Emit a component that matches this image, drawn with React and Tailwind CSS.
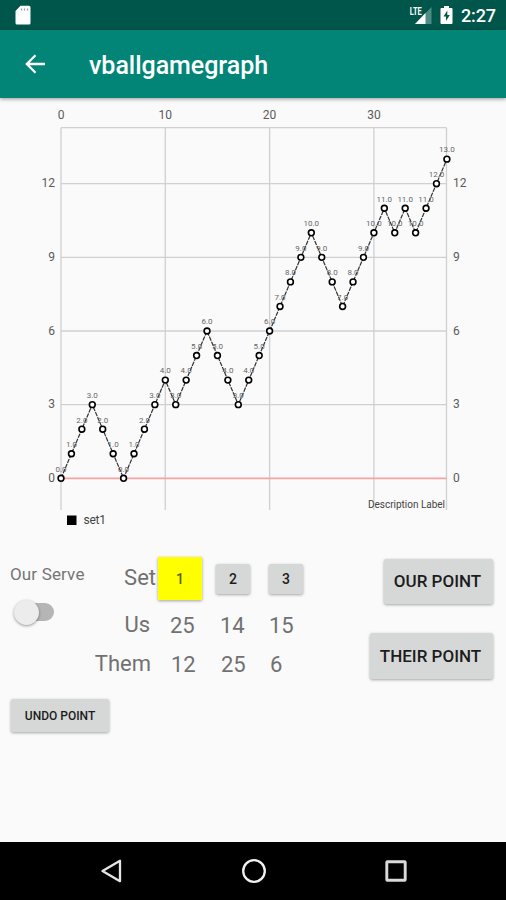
const LEFT = 61
const RIGHT = 446.5
const TOP = 29.7
const BOTTOM = 412
const STEP_X = 10.43
const STEP_Y = 24.55
const ZERO_Y = 380.3

const points = [
  0, 1, 2, 3, 2, 1, 0, 1, 2, 3, 4, 3, 4, 5, 6, 5, 4, 3, 4, 5, 6, 7, 8, 9, 10, 9, 8, 7, 8, 9, 10, 11, 10, 11, 10, 11,
  12, 13,
]

const sets = [
  { id: 1, us: 25, them: 12 },
  { id: 2, us: 14, them: 25 },
  { id: 3, us: 15, them: 6 },
]

const px = (i) => LEFT + i * STEP_X
const py = (v) => ZERO_Y - v * STEP_Y

function StatusBar() {
  return (
    <div className="flex h-[30px] items-center bg-[#00564b] pl-[15px] pr-[10px] text-white">
      <svg className="h-[20px] w-[16px]" viewBox="0 0 16 20">
        <path d="M5.5 0.8H14a1.5 1.5 0 0 1 1.5 1.5V18a1.5 1.5 0 0 1-1.5 1.5H2A1.5 1.5 0 0 1 .5 18V6z" fill="#fff" />
        <path d="M6.5 3.500v2M9.5 3.500v2M12.5 3.500v2" stroke="#7fa9a4" strokeWidth="1.3" />
      </svg>
      <div className="ml-auto flex items-center">
        <svg className="h-[20px] w-[24px]" viewBox="0 0 24 20">
          <path d="M6 19 22.500 2V19z" fill="#4d8c84" />
          <path d="M6 19 16.500 8V19z" fill="#fff" />
          <text x="0.800" y="9.500" fontSize="10.500" fontWeight="700" fill="#fff" textLength="12" lengthAdjust="spacingAndGlyphs">
            LTE
          </text>
        </svg>
        <svg className="ml-[7px] h-[20px] w-[13px]" viewBox="0 0 13 20">
          <path d="M4 1h5v2h2.500q1 0 1 1V18q0 1-1 1h-10q-1 0-1-1V4q0-1 1-1H4z" fill="#fff" />
          <path d="M7.300 5.500 3.500 11.500H6V16l3.800-6H7.300z" fill="#00564b" />
        </svg>
        <span className="ml-[8px] mt-[2px] text-[18px] font-medium leading-none tracking-[-0.1px]">2:27</span>
      </div>
    </div>
  )
}

function AppBar() {
  return (
    <header className="relative flex h-[68px] items-center bg-[#028577] pl-[25px] text-white shadow-[0_1px_4px_rgba(0,0,0,0.4)]">
      <svg className="h-[20px] w-[21px]" viewBox="0 0 21 20" fill="none" stroke="#fff" strokeWidth="2.300">
        <path d="M20 10H2M10.500 1.200 1.800 10l8.700 8.800" />
      </svg>
      <h1 className="ml-[43px] mt-[3px] text-[25px] font-medium leading-none tracking-[-0.03px]">vballgamegraph</h1>
    </header>
  )
}

function Chart() {
  return (
    <svg className="block h-[442px] w-[506px]" viewBox="0 0 506 442">
      <g stroke="#d0d0d0" strokeWidth="1.300">
        {[LEFT, px(10), px(20), px(30), RIGHT].map((x) => (
          <line key={x} x1={x} x2={x} y1={TOP} y2={BOTTOM} />
        ))}
        <line x1={LEFT} x2={RIGHT} y1={TOP} y2={TOP} />
        {[3, 6, 9, 12].map((v) => (
          <line key={v} x1={LEFT} x2={RIGHT} y1={py(v)} y2={py(v)} />
        ))}
      </g>
      <line x1={LEFT} x2={RIGHT} y1={ZERO_Y} y2={ZERO_Y} stroke="#f5a3a5" strokeWidth="1.800" />
      <g fontSize="12" fill="#5a5a5a">
        {[0, 10, 20, 30].map((n) => (
          <text key={n} x={px(n)} y="21" textAnchor="middle">
            {n}
          </text>
        ))}
        {[0, 3, 6, 9, 12].map((v) => (
          <g key={v}>
            <text x="55" y={py(v) + 3.7} textAnchor="end">
              {v}
            </text>
            <text x="453" y={py(v) + 3.7}>
              {v}
            </text>
          </g>
        ))}
      </g>
      <polyline
        points={points.map((v, i) => `${px(i)},${py(v)}`).join(" ")}
        fill="none"
        stroke="#333"
        strokeWidth="1.200"
        strokeDasharray="4.500 1"
      />
      <g fontSize="8" fill="#666" textAnchor="middle">
        {points.map((v, i) => (
          <text key={i} x={px(i)} y={py(v) - 6.7}>
            {v.toFixed(1)}
          </text>
        ))}
      </g>
      <g fill="#fff" stroke="#000" strokeWidth="1.600">
        {points.map((v, i) => (
          <circle key={i} cx={px(i)} cy={py(v)} r="2.900" />
        ))}
      </g>
      <text x="445" y="409.500" fontSize="10" fill="#444" textAnchor="end" textLength="77">
        Description Label
      </text>
      <rect x="67" y="417.500" width="9.500" height="9.500" fill="#000" />
      <text x="83.500" y="426" fontSize="12" fill="#444" textLength="22.500">
        set1
      </text>
    </svg>
  )
}

function Button({ className, children }) {
  return (
    <button
      className={`rounded-[2px] bg-[#d6d8d7] font-medium leading-none text-[#1c1c1c] shadow-[0_1px_3px_rgba(0,0,0,0.35)] ${className}`}
    >
      {children}
    </button>
  )
}

function Scores() {
  return (
    <div className="flex text-[22px] leading-[26px] text-[#717171]">
      <div className="flex w-[62px] flex-col items-end">
        <span className="mr-px mt-[8px]">Set</span>
        <span className="mr-[7px] mt-[21px]">Us</span>
        <span className="mr-[6px] mt-[13px]">Them</span>
      </div>
      <div className="ml-[1px] flex">
        {sets.map((set) => (
          <div key={set.id} className={set.id === 1 ? "w-[58px]" : "w-[53px]"}>
            <div className="flex h-[43px] items-center">
              {set.id === 1 ? (
                <button className="h-[43px] w-[44px] bg-[#ffff00] text-[14px] font-medium leading-none text-[#5c5c10] shadow-[0_1px_3px_rgba(0,0,0,0.35)]">
                  1
                </button>
              ) : (
                <Button className="h-[30px] w-[34px] text-[14px]">{set.id}</Button>
              )}
            </div>
            <div className={set.id === 1 ? "ml-[12px] mt-[13px]" : set.id === 2 ? "ml-[4px] mt-[13px]" : "mt-[13px]"}>
              {set.us}
            </div>
            <div className={set.id === 1 ? "ml-[13px] mt-[13px]" : set.id === 2 ? "ml-[5px] mt-[13px]" : "ml-[1px] mt-[13px]"}>
              {set.them}
            </div>
          </div>
        ))}
      </div>
    </div>
  )
}

function Controls() {
  return (
    <div className="flex items-start pl-[11px] pr-[13px] pt-[17px]">
      <div className="w-[84px]">
        <p className="-ml-px mt-[8px] whitespace-nowrap text-[17px] leading-[18px] tracking-[0.15px] text-[#757575]">Our Serve</p>
        <div className="mt-[16px] flex h-[26px] items-center pl-[3px]">
          <div className="z-10 h-[25px] w-[25px] rounded-full bg-[#ececec] shadow-[0_1px_3px_rgba(0,0,0,0.4)]"></div>
          <div className="-ml-[12px] h-[18px] w-[27px] rounded-full bg-[#b5b5b5]"></div>
        </div>
        <Button className="mt-[74px] h-[33px] w-[98px] whitespace-nowrap text-[12px]">UNDO POINT</Button>
      </div>
      <Scores />
      <div className="ml-auto flex flex-col items-end pt-[2px]">
        <Button className="h-[45px] w-[109px] pr-[2px] text-[17px]">OUR POINT</Button>
        <Button className="mt-[29px] h-[46px] w-[123px] pr-[2px] text-[17px]">THEIR POINT</Button>
      </div>
    </div>
  )
}

function NavBar() {
  return (
    <nav className="mt-auto flex h-[58px] items-center justify-between bg-black pl-[100px] pr-[99px]">
      <svg className="h-[24px] w-[22px]" viewBox="0 0 22 24" fill="none" stroke="#e6e6e6" strokeWidth="2.300">
        <path d="M20 1.800V22.200L2.500 12z" strokeLinejoin="round" />
      </svg>
      <svg className="h-[26px] w-[26px]" viewBox="0 0 26 26" fill="none" stroke="#f2f2f2" strokeWidth="2.300">
        <circle cx="13" cy="13" r="10.800" />
      </svg>
      <svg className="h-[22px] w-[22px]" viewBox="0 0 22 22" fill="none" stroke="#d9d9d9" strokeWidth="2.900">
        <rect x="1.800" y="1.800" width="18.400" height="18.400" rx="0.500" />
      </svg>
    </nav>
  )
}

export default function App() {
  return (
    <div className="flex h-[900px] w-[506px] flex-col overflow-hidden bg-[#fafafa] font-[Roboto,sans-serif]">
      <StatusBar />
      <AppBar />
      <Chart />
      <Controls />
      <NavBar />
    </div>
  )
}
